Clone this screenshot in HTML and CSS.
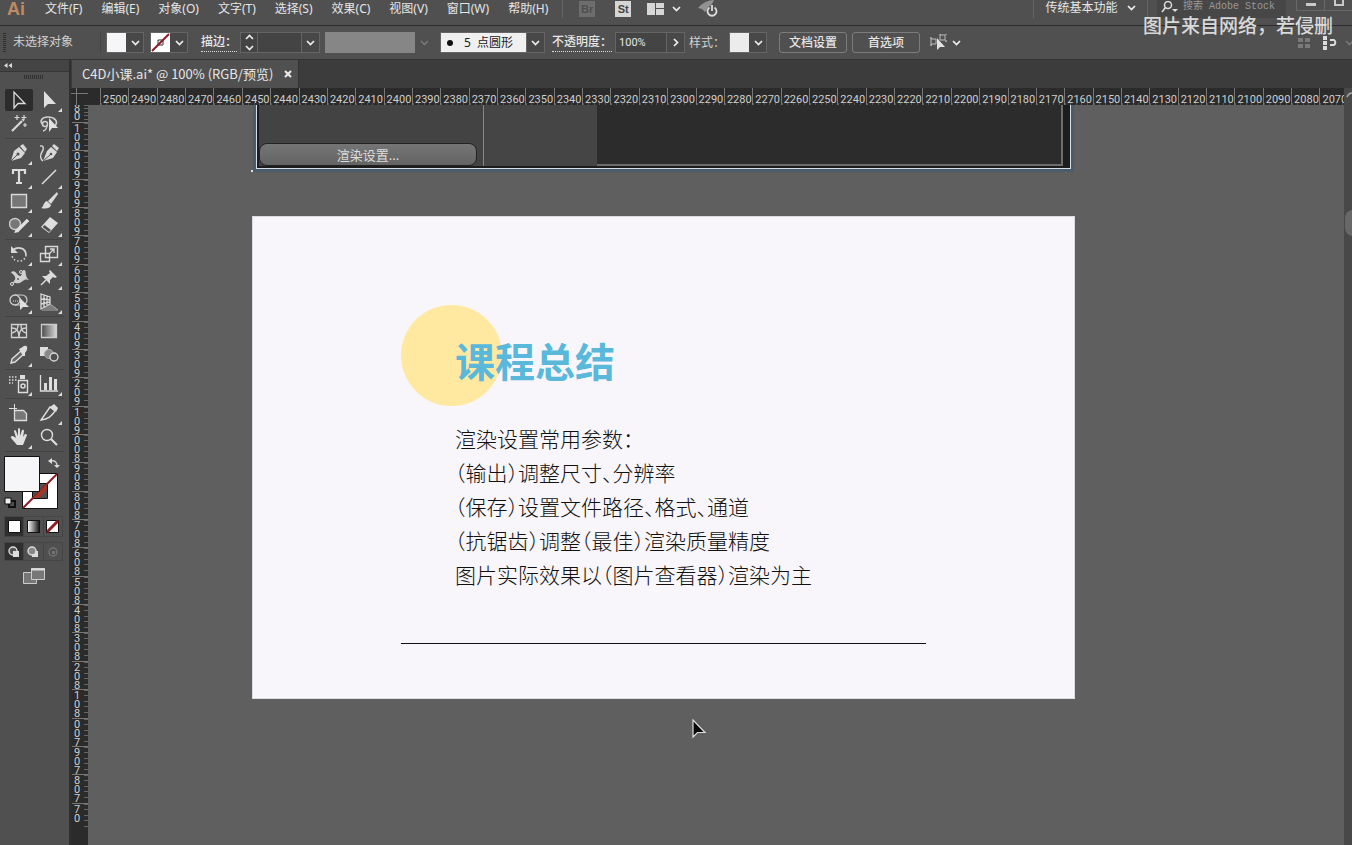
FILE: index.html
```html
<!DOCTYPE html>
<html lang="zh-CN">
<head>
<meta charset="utf-8">
<title>C4D小课.ai</title>
<link rel="stylesheet" href="styles.css">
</head>
<body>
<svg class="defs" aria-hidden="true">
  <symbol id="chev" viewBox="0 0 9 6"><path d="M1 1l3.500 3.500L8 1" fill="none" stroke="currentColor" stroke-width="1.700"/></symbol>
  <linearGradient id="fade"><stop offset="0" stop-color="#4a4a4a"/><stop offset="1" stop-color="#d8d8d8"/></linearGradient>
  <linearGradient id="fade2"><stop offset="0" stop-color="#fff"/><stop offset="1" stop-color="#111"/></linearGradient>
</svg>
<div class="app">
  <header class="menubar">
    <span class="logo">Ai</span>
    <nav class="menus">
      <button>文件(F)</button><button>编辑(E)</button><button>对象(O)</button><button>文字(T)</button><button>选择(S)</button><button>效果(C)</button><button>视图(V)</button><button>窗口(W)</button><button>帮助(H)</button>
    </nav>
    <div class="bridge">
      <button class="chip dim">Br</button>
      <button class="chip">St</button>
      <button class="arrange" aria-label="排列文档"><svg width="17" height="12" viewBox="0 0 17 12"><path d="M0 0h8v12H0zM9 0h8v5H9zM9 6h8v6H9z" fill="#d6d6d6"/></svg><svg class="chev" width="9" height="6"><use href="#chev"/></svg></button>
      <button class="gpu" aria-label="GPU 性能"><svg width="22" height="18" viewBox="0 0 22 18"><path d="M1 8Q8 0 17 0Q15 5 8 12L5 9Z" fill="#929292"/><circle cx="15" cy="11" r="5.500" fill="#505050"/><path d="M12.500 7.500a4.500 4.500 0 1 0 5 0M15 5v6" fill="none" stroke="#ddd" stroke-width="1.800"/></svg></button>
    </div>
    <div class="workspace">
      <button class="preset">传统基本功能<svg class="chev" width="9" height="6"><use href="#chev"/></svg></button>
      <label class="search"><svg width="18" height="12" viewBox="0 0 18 12"><circle cx="7" cy="4" r="3.500" fill="none" stroke="#ddd" stroke-width="1.500"/><path d="M4.500 6.500L1 11" stroke="#ddd" stroke-width="1.600"/><path d="M11 8h6l-3 3z" fill="#ddd"/></svg><input type="text" placeholder="搜索 Adobe Stock" aria-label="搜索 Adobe Stock"></label>
      <div class="window"><button aria-label="最小化"><svg width="10" height="4"><path d="M0 0h10v3H0z" fill="#c9c9c9"/></svg></button><button aria-label="最大化"><svg width="10" height="7"><path d="M1 0v5h8V0" fill="none" stroke="#c9c9c9" stroke-width="2"/></svg></button></div>
    </div>
    <p class="credit">图片来自网络，若侵删</p>
  </header>

  <section class="controls">
    <span class="grip-v"></span>
    <span class="state">未选择对象</span>
    <button class="drop fill" aria-label="填色"><span class="swatch"></span><svg class="chev" width="9" height="6"><use href="#chev"/></svg></button>
    <button class="drop stroke" aria-label="描边颜色"><svg width="19" height="19" viewBox="0 0 19 19"><path d="M0 0h19v19H0z" fill="#fff"/><path d="M7 7h5v5H7z" fill="none" stroke="#333"/><path d="M1 18L18 1" stroke="#8c1a22" stroke-width="2"/></svg><svg class="chev" width="9" height="6"><use href="#chev"/></svg></button>
    <label class="link" for="weight">描边：</label>
    <div class="combo weight">
      <button class="step" aria-label="调整描边粗细"><svg width="9" height="17" viewBox="0 0 9 17"><path d="M1 5l3.500-3.500L8 5M1 12l3.500 3.500L8 12" fill="none" stroke="#eee" stroke-width="1.600"/></svg></button>
      <input id="weight" type="text"><button class="open" aria-label="描边预设"><svg class="chev" width="9" height="6"><use href="#chev"/></svg></button>
    </div>
    <button class="profile" aria-label="变量宽度配置"><span></span><svg class="chev" width="9" height="6"><use href="#chev"/></svg></button>
    <div class="combo brush">
      <span class="dot"></span><select aria-label="画笔"><option>5&nbsp; 点圆形</option></select><span class="open"><svg class="chev" width="9" height="6"><use href="#chev"/></svg></span>
    </div>
    <label class="link opacity-label" for="opacity">不透明度：</label>
    <div class="combo opacity"><input id="opacity" type="text" value="100%"><button class="open" aria-label="不透明度滑块"><svg width="6" height="9" viewBox="0 0 6 9"><path d="M1 1l3.500 3.500L1 8" fill="none" stroke="#eee" stroke-width="1.700"/></svg></button></div>
    <span class="style-label">样式：</span>
    <button class="drop style" aria-label="图形样式"><span class="swatch"></span><svg class="chev" width="9" height="6"><use href="#chev"/></svg></button>
    <button class="push first">文档设置</button>
    <button class="push">首选项</button>
    <button class="similar" aria-label="选择类似的对象"><svg width="17" height="17" viewBox="0 0 17 17"><path d="M1 5h5v5H1zM10 1h5v5h-5z" fill="none" stroke="#bbb"/><path d="M0 4h2M0 11h2M9 0h2M15 0h2M15 7h2" stroke="#ddd"/><path d="M7 4v12l3-3h5z" fill="#e2e2e2"/></svg><svg class="chev" width="9" height="6"><use href="#chev"/></svg></button>
    <div class="dock">
      <button aria-label="对齐像素"><svg width="12" height="12" viewBox="0 0 12 12"><path d="M0 1h5v4H0zM7 1h5v4H7zM0 7h5v4H0zM7 7h5v4H7z" fill="#7a7a7a"/></svg></button>
      <button aria-label="面板选项"><svg width="15" height="14" viewBox="0 0 15 14"><path d="M0 0h4v4H0zM0 5h4v4H0zM0 10h4v4H0z" fill="#ddd"/><path d="M7 4h4a3 3 0 0 1 0 5H7" fill="none" stroke="#ddd" stroke-width="2"/></svg></button>
      <button aria-label="更多"><svg class="chev faint" width="9" height="6"><use href="#chev"/></svg></button>
    </div>
  </section>

  <main class="body">
    <aside class="toolbox">
      <button class="collapse" aria-label="折叠工具栏"><svg width="8" height="5" viewBox="0 0 8 5"><path d="M3.500 0v5L0 2.500zM8 0v5L4.500 2.500z" fill="#ddd"/></svg></button>
      <span class="grip-h"></span>
      <div class="tools">
        <button class="on" aria-label="选择"><svg viewBox="0 0 20 20"><path d="M5 2v16l4-4.500h7z" fill="none" stroke="#ddd" stroke-width="1.300"/></svg></button>
        <button class="more" aria-label="直接选择"><svg viewBox="0 0 20 20"><path d="M5 1v17l4-4h8z" fill="#e0e0e0"/></svg></button>
        <button aria-label="魔棒"><svg viewBox="0 0 20 20"><path d="M3 17L13 7" stroke="#d8d8d8" stroke-width="2.200"/><path d="M8 1v5M5.500 3.500h5M15 1v5M12.500 3.500h5M16 9v4M14 11h4M13 5l2 2" stroke="#d8d8d8" stroke-width="1.200"/></svg></button>
        <button aria-label="套索"><svg viewBox="0 0 20 20"><path d="M4 11C0 7 3 3 9 3s11 4 7 9" fill="none" stroke="#d0d0d0" stroke-width="1.600"/><circle cx="6" cy="10" r="2.500" fill="none" stroke="#d0d0d0" stroke-width="1.400"/><path d="M8 11q0 5-4 6" fill="none" stroke="#d0d0d0" stroke-width="1.300"/><path d="M10 4v14l3-4h6z" fill="#e0e0e0"/></svg></button>
      </div>
      <div class="tools">
        <button class="more" aria-label="钢笔"><svg viewBox="0 0 20 20"><path d="M2 18L5 8l5-4 6 6-4 5z" fill="#d8d8d8"/><path d="M11 3l3-2 4 5-2 3z" fill="#d8d8d8"/><path d="M2 18l6-6" stroke="#505050"/><circle cx="9" cy="11" r="1.500" fill="#505050"/></svg></button>
        <button aria-label="曲率"><svg viewBox="0 0 20 20"><path d="M4 18l4-10 4-4 6 5-4 6z" fill="#d8d8d8"/><path d="M13 3l2-2 5 4-2 3z" fill="#d8d8d8"/><path d="M4 18l7-6" stroke="#505050"/><circle cx="12" cy="11" r="1.300" fill="#505050"/><path d="M1 3c4-1 4 3 2 6s-2 7 1 9" fill="none" stroke="#d8d8d8" stroke-width="1.400"/></svg></button>
        <button class="more" aria-label="文字"><svg viewBox="0 0 20 20"><path d="M4 7V3h12v4M10 3v13M7 16h6" fill="none" stroke="#dcdcdc" stroke-width="2.200"/></svg></button>
        <button class="more" aria-label="直线段"><svg viewBox="0 0 20 20"><path d="M3 17L17 3" stroke="#d8d8d8" stroke-width="1.600"/></svg></button>
        <button class="more" aria-label="矩形"><svg viewBox="0 0 20 20"><path d="M2.500 3.500h15v13h-15z" fill="#777" stroke="#d8d8d8" stroke-width="1.400"/></svg></button>
        <button class="more" aria-label="画笔"><svg viewBox="0 0 20 20"><path d="M18 1l1 2-7 10-3-3z" fill="#dcdcdc"/><path d="M8 10l4 4c-1 4-6 4-10 3 3-1 2-6 6-7z" fill="#dcdcdc"/></svg></button>
        <button class="more" aria-label="Shaper"><svg viewBox="0 0 20 20"><circle cx="6" cy="9" r="5.500" fill="#777" stroke="#ccc" stroke-width="1.400"/><path d="M8 16L19 5" stroke="#e0e0e0" stroke-width="3.200"/><path d="M5 18l2-4 3 3z" fill="#e0e0e0"/></svg></button>
        <button class="more" aria-label="橡皮擦"><svg viewBox="0 0 20 20"><path d="M2 12L11 2l8 6-9 10z" fill="#dedede"/><path d="M5.500 10l6.500 5-2 2-6.500-5z" fill="#505050"/></svg></button>
      </div>
      <div class="tools">
        <button class="more" aria-label="旋转"><svg viewBox="0 0 20 20"><path d="M4 6c5-4 13-2 13 5" fill="none" stroke="#d8d8d8" stroke-width="1.700"/><path d="M2 2v7h7z" fill="#d8d8d8"/><path d="M17 11c-1 8-12 8-14 1" fill="none" stroke="#d8d8d8" stroke-width="1.500" stroke-dasharray="1.500 2"/></svg></button>
        <button class="more" aria-label="比例缩放"><svg viewBox="0 0 20 20"><path d="M6.500 2.500h12v11h-12zM1.500 9.500h9v8h-9z" fill="none" stroke="#d8d8d8" stroke-width="1.400"/><path d="M10 10l5-5M11 5h4v4" fill="none" stroke="#d8d8d8" stroke-width="1.300"/></svg></button>
        <button class="more" aria-label="宽度"><svg viewBox="0 0 20 20"><path d="M2 4c5-3 6 4 9 4s1-6 4-6 0 6 5 10c-5-2-6 2-10 3s-4-2-7 1c2-4 4-4 3-7s-3-3-4-5z" fill="#d0d0d0"/><circle cx="12" cy="4" r="1.500" fill="#505050" stroke="#ddd"/><circle cx="9" cy="11" r="1.500" fill="#505050" stroke="#ddd"/><circle cx="3" cy="16" r="1.500" fill="#505050" stroke="#ddd"/></svg></button>
        <button class="more" aria-label="操控变形"><svg viewBox="0 0 20 20"><path d="M11 2l7 7-2 1-2-1-3 3v4L3 8h4l4-3-1-2z" fill="#dcdcdc"/><path d="M7 12l-5 5" stroke="#dcdcdc" stroke-width="1.500"/></svg></button>
        <button class="more" aria-label="形状生成器"><svg viewBox="0 0 20 20"><circle cx="6" cy="8" r="5" fill="none" stroke="#ccc" stroke-width="1.300"/><path d="M6 3h7a5 5 0 0 1 0 10H6" fill="none" stroke="#ccc" stroke-width="1.200"/><path d="M4 9h8" stroke="#ddd" stroke-dasharray="1 1"/><path d="M11 6v12l3-3h6z" fill="#e0e0e0"/></svg></button>
        <button class="more" aria-label="透视网格"><svg viewBox="0 0 20 20"><path d="M2 2l9 3v7l-9 5zM5 3v12M8 4v10M2 7l9 1M2 12l9-2" fill="none" stroke="#d8d8d8" stroke-width="1.300"/><path d="M8 14h6M5 16h12M3 18h16M11 12l8 6" stroke="#aaa"/></svg></button>
      </div>
      <div class="tools">
        <button aria-label="网格"><svg viewBox="0 0 20 20"><path d="M2.500 3.500h15v13h-15z" fill="none" stroke="#d0d0d0" stroke-width="1.300"/><path d="M3 7c5 0 7 3 7 9M17 7c-5 0-7 3-7 9M3 12c4-1 6-4 6-8M17 12c-4-1-5-4-5-8" fill="none" stroke="#d0d0d0" stroke-width="1.400"/></svg></button>
        <button aria-label="渐变"><svg viewBox="0 0 20 20"><path d="M2.500 3.500h15v13h-15z" fill="url(#fade)" stroke="#ccc" stroke-width="1.300"/></svg></button>
        <button class="more" aria-label="吸管"><svg viewBox="0 0 20 20"><path d="M12 6l3 3-9 8-4 1 1-4z" fill="#666" stroke="#ddd" stroke-width="1.400"/><path d="M10 4l2-1 3-2q4-1 3 4l-2 3v3l-2 0z" fill="#ddd"/></svg></button>
        <button aria-label="混合"><svg viewBox="0 0 20 20"><path d="M1 2h8v9H1z" fill="#ddd"/><circle cx="10" cy="9" r="4.500" fill="#888" stroke="#aaa"/><circle cx="15" cy="12" r="4" fill="#505050" stroke="#ddd" stroke-width="1.300"/></svg></button>
      </div>
      <div class="tools">
        <button class="more" aria-label="符号喷枪"><svg viewBox="0 0 20 20"><path d="M9.500 6.500h9v12h-9z" fill="none" stroke="#ddd" stroke-width="1.400"/><path d="M11 1h5v4h-5z" fill="#ddd"/><circle cx="14" cy="12" r="2" fill="none" stroke="#ddd" stroke-width="1.500"/><path d="M0 3h9M0 6h8M0 9h4" stroke="#ddd" stroke-width="1.500" stroke-dasharray="1.500 1.500"/></svg></button>
        <button class="more" aria-label="柱形图"><svg viewBox="0 0 20 20"><path d="M1.500 1v16H19" fill="none" stroke="#ddd" stroke-width="1.300"/><path d="M5 9h3v7H5zM10 3h3v13h-3zM15 5h3v11h-3z" fill="#ddd"/></svg></button>
      </div>
      <div class="tools">
        <button aria-label="画板"><svg viewBox="0 0 20 20"><path d="M0 5.500h8M5.500 1v7" stroke="#ddd"/><path d="M5.500 7.500h9l3 3v7h-12z" fill="#777" stroke="#ddd" stroke-width="1.300"/></svg></button>
        <button class="more" aria-label="切片"><svg viewBox="0 0 20 20"><path d="M11 4l4-3 4 4-2 4z" fill="#ddd"/><path d="M11 4L2 17c7-1 10-3 14-9z" fill="none" stroke="#ddd" stroke-width="1.400"/></svg></button>
        <button class="more" aria-label="抓手"><svg viewBox="0 0 20 20"><path d="M8 18L2 11q-1-2 2-2l3 2L5 4q1-2 2 0l2 5V2q1-2 2 0v7l2-6q2-1 2 1l-1 6 2-3q2 0 2 1l-4 10z" fill="#e0e0e0"/></svg></button>
        <button aria-label="缩放"><svg viewBox="0 0 20 20"><circle cx="8" cy="8" r="5.500" fill="none" stroke="#ddd" stroke-width="1.400"/><path d="M12 12l6 6" stroke="#ddd" stroke-width="2.200"/></svg></button>
      </div>
      <button class="paint" aria-label="填色和描边"><svg width="58" height="54" viewBox="0 0 58 54"><path d="M18.500 17.500h35v35h-35z" fill="#fff" stroke="#111"/><path d="M28.500 27.500h15v15h-15z" fill="#505050" stroke="#111"/><path d="M19 52L53 18" stroke="#8c1c22" stroke-width="2"/><path d="M29 42L43 28V34L35 42Z" fill="#a33529"/><path d="M.5.500h35v35h-35z" fill="#f6f5f8" stroke="#111"/><path d="M47 5q6-1 6 5" fill="none" stroke="#ccc" stroke-width="1.500"/><path d="M44 5l4-3v6zM50 9h6l-3 3z" fill="#ddd"/><path d="M5 45h6v6H5z" fill="none" stroke="#111" stroke-width="2"/><path d="M1 42h6v6H1z" fill="#eee" stroke="#111"/></svg></button>
      <div class="modes fills">
        <button class="on" aria-label="颜色"><svg width="13" height="13"><path d="M.5.500h12v12H.5z" fill="#fff" stroke="#111"/></svg></button>
        <button aria-label="渐变填充"><svg width="13" height="13"><path d="M.5.500h12v12H.5z" fill="url(#fade2)" stroke="#111"/></svg></button>
        <button aria-label="无"><svg width="13" height="13"><path d="M.5.500h12v12H.5z" fill="#fff" stroke="#111"/><path d="M1 12L12 1" stroke="#8c1c22" stroke-width="3"/></svg></button>
      </div>
      <div class="modes">
        <button class="on" aria-label="正常绘图"><svg width="12" height="12"><circle cx="5" cy="5" r="4" fill="#555" stroke="#ddd" stroke-width="1.400"/><path d="M5 5h6v6H5z" fill="#ddd"/></svg></button>
        <button aria-label="背面绘图"><svg width="12" height="12"><path d="M5 5h6v6H5z" fill="#ddd"/><circle cx="5" cy="5" r="4" fill="#888" stroke="#ddd" stroke-width="1.400"/></svg></button>
        <button aria-label="内部绘图"><svg width="12" height="12"><circle cx="6" cy="6" r="4" fill="none" stroke="#727272" stroke-width="1.400"/><path d="M5 5h3v3H5z" fill="#727272"/></svg></button>
      </div>
      <button class="screen" aria-label="更改屏幕模式"><svg width="22" height="16"><path d="M.5 4.500h13v11H.5z" fill="#777" stroke="#ccc"/><path d="M8.500.500h13v11h-13z" fill="#777" stroke="#ccc"/><path d="M8 1.500h14" stroke="#ddd" stroke-width="2"/></svg></button>
    </aside>

    <section class="document">
      <div class="tabs"><div class="tab"><span>C4D小课.ai* @ 100% (RGB/预览)</span><button aria-label="关闭"><svg width="8" height="8" viewBox="0 0 8 8"><path d="M1 1l6 6M7 1L1 7" stroke="#eee" stroke-width="2"/></svg></button></div></div>
      <div class="view">
        <div class="corner"></div>
        <div class="ruler-x" id="rulerX"></div>
        <div class="ruler-y" id="rulerY"></div>
        <div class="canvas">
          <div class="shot">
            <div class="shot-side"><button>渲染设置...</button></div>
            <div class="shot-mid"></div>
            <div class="shot-main"></div>
          </div>
          <span class="anchor"></span>
          <article class="artboard">
            <div class="sun"></div>
            <h1>课程总结</h1>
            <div class="notes">
              <p>渲染设置常用参数：</p>
              <p>（输出）调整尺寸、分辨率</p>
              <p>（保存）设置文件路径、格式、通道</p>
              <p>（抗锯齿）调整（最佳）渲染质量精度</p>
              <p>图片实际效果以（图片查看器）渲染为主</p>
            </div>
            <hr>
          </article>
          <svg class="pointer" width="15" height="20" viewBox="0 0 15 20"><path d="M1 1v17l4.500-4.500H13z" fill="#0a0a0a" stroke="#ddd" stroke-width="1.200"/></svg>
        </div>
        <div class="scroll"><svg width="8" height="6" viewBox="0 0 8 6"><path d="M3 5q2-4 5-4" fill="none" stroke="#aaa" stroke-width="1.500"/></svg><span></span></div>
      </div>
    </section>
  </main>
</div>
<script src="app.js"></script>
</body>
</html>
```
FILE: styles.css
```css
* { box-sizing: border-box; }
body {
  margin: 0;
  background: #505050;
  color: #e6e6e6;
  font: 12px/16px "Noto Sans", "Noto Sans CJK SC", sans-serif;
}
button, input, select { font: inherit; color: inherit; margin: 0; padding: 0; border: 0; background: none; border-radius: 0; }
button { display: flex; align-items: center; justify-content: center; flex: none; white-space: nowrap; }
svg { display: block; flex: none; }
p, h1 { margin: 0; }
.defs { position: absolute; width: 0; height: 0; }
.chev { color: #eee; }
.faint { color: #777; }
.app { display: flex; flex-direction: column; height: 100vh; overflow: hidden; }

.menubar { position: relative; display: flex; height: 26px; flex: none; padding-bottom: 8px; align-items: center; border-bottom: 1px solid #2b2b2b; }
.logo { width: 45px; padding-left: 7px; color: #c08a63; font: bold 18px/16px "Liberation Sans", sans-serif; }
.menus { display: flex; gap: 19px; }
.bridge { display: flex; align-items: center; margin-left: 14px; padding-left: 16px; border-left: 1px solid #656565; height: 18px; }
.chip { width: 16px; height: 16px; background: #d6d6d6; color: #444; font: bold 11px/16px "Liberation Sans", sans-serif; margin-right: 20px; }
.chip.dim { background: #6d6d6d; color: #4f4f4f; }
.arrange { gap: 8px; margin-left: -4px; }
.gpu { margin-left: 16px; }
.workspace { display: flex; align-items: center; margin-left: auto; height: 18px; }
.preset { gap: 9px; width: 115px; height: 18px; padding-bottom: 2px; border: solid #656565; border-width: 0 1px; margin-right: 9px; }
.search { display: flex; align-items: center; width: 129px; height: 18px; background: #474747; padding: 0 0 4px 4px; }
.search input { min-width: 0; flex: 1; height: 14px; padding-left: 4px; font: 10px/14px "Liberation Mono", "Noto Sans CJK SC", monospace; color: #999; }
.search input::placeholder { color: #999; opacity: 1; }
.window { display: flex; margin: 0 0 7px 10px; border: 1px solid #686868; border-width: 0 0 1px 1px; height: 11px; }
.window button { width: 28px; height: 10px; border-right: 1px solid #686868; }
.window button:last-child { width: 27px; border: 0; align-items: flex-start; }
.credit { position: absolute; z-index: 2; right: 19px; top: 12px; font-size: 19px; line-height: 28px; font-weight: 500; color: #d9d9d9; }

.controls { display: flex; align-items: center; height: 34px; flex: none; border-bottom: 1px solid #333; padding-left: 3px; }
.grip-v { width: 3px; height: 20px; background: repeating-linear-gradient(#303030 0 1px, transparent 1px 2px); }
.state { width: 95px; height: 20px; padding-left: 7px; border-right: 1px solid #454545; color: #d0d0d0; line-height: 18px; }
.drop { width: 38px; height: 21px; border: 1px solid #656565; background: #484848; gap: 5px; justify-content: flex-start; }
.drop .swatch { width: 19px; height: 19px; background: #f6f5f8; }
.fill { margin-left: 5px; }
.stroke { margin-left: 6px; }
.link { border-bottom: 1px dotted #ddd; line-height: 18px; white-space: nowrap; margin-left: 13px; font-weight: 500; }
.opacity-label { margin-left: 7px; }
.combo { display: flex; height: 21px; border: 1px solid #656565; background: #444; }
.combo input, .combo select { min-width: 0; flex: 1; }
.combo .open { display: flex; align-items: center; justify-content: center; width: 18px; background: #484848; border-left: 1px solid #656565; }
.weight { width: 80px; margin-left: 3px; }
.step { width: 17px; border-right: 1px solid #656565; }
.profile { width: 104px; height: 21px; margin-left: 5px; gap: 5px; }
.profile span { flex: 1; height: 21px; background: #868686; }
.profile .chev { color: #777; }
.brush { width: 105px; margin-left: 11px; background: #f0f0f0; align-items: stretch; }
.brush .dot { width: 6px; height: 6px; margin: 7px 11px 0 6px; border-radius: 50%; background: #111; }
.brush select { appearance: none; color: #222; }
.opacity { width: 70px; margin-left: 3px; }
.opacity input { padding-left: 3px; font: 11px/18px Roboto, sans-serif; }
.style-label { margin-left: 4px; white-space: nowrap; color: #d0d0d0; }
.style { margin-left: 4px; }
.style .swatch { background: #ececec; }
.push { width: 68px; height: 21px; border: 1px solid #7c7c7c; border-radius: 3px; margin-right: 5px; font-weight: 500; }
.push.first { margin-left: 12px; }
.similar { gap: 5px; margin-left: 5px; }
.dock { display: flex; align-items: center; gap: 13px; margin-left: auto; margin-right: -2px; }
.dock button:last-child { margin-left: -6px; }

.body { display: flex; flex: 1; min-height: 0; }
.toolbox { display: flex; flex-direction: column; width: 71px; flex: none; border-right: 2px solid #303030; background: #505050; }
.collapse { width: 100%; height: 12px; justify-content: flex-start; padding-left: 4px; background: #444; border-bottom: 1px solid #363636; }
.grip-h { width: 19px; height: 4px; margin: 3px 0 9px 24px; background: repeating-linear-gradient(90deg, #303030 0 1px, transparent 1px 2px); }
.tools { display: grid; grid-template-columns: 28px 28px; grid-auto-rows: 24px; gap: 0 2px; margin: 0 5px 2px; padding-bottom: 2px; border-bottom: 1px solid #434343; align-items: center; }
.tools button { position: relative; height: 22px; border-radius: 2px; }
.tools svg { width: 20px; height: 20px; }
.tools .on { background: #2c2c2c; }
.tools .more::after { content: ""; position: absolute; right: 1px; bottom: -1px; border: solid transparent; border-width: 2px; border-right-color: #ddd; border-bottom-color: #ddd; }
.paint { margin: 2px 0 6px 4px; align-self: flex-start; }
.modes { display: flex; width: 59px; margin: 0 0 5px 4px; border: 1px solid #454545; }
.modes button { flex: 1; height: 17px; border-right: 1px solid #454545; }
.fills button { height: 19px; }
.modes button:last-child { border: 0; }
.modes .on { background: #2f2f2f; }
.screen { margin: 2px 0 0 23px; align-self: flex-start; }

.document { display: flex; flex-direction: column; flex: 1; min-width: 0; background: #3c3c3c; }
.tabs { height: 28px; flex: none; padding-left: 1px; }
.tab { display: flex; align-items: center; justify-content: space-between; width: 227px; height: 28px; padding: 0 6px 0 10px; background: #505050; border-right: 1px solid #333; white-space: nowrap; font-family: "Noto Sans CJK SC", sans-serif; font-size: 13px; }
.view { display: grid; grid-template: 17px 1fr / 17px 1fr 8px; flex: 1; min-height: 0; }
.corner { background: linear-gradient(#777, #777) 5px 0 / 1px 100% no-repeat, linear-gradient(#777, #777) 0 5px / 100% 1px no-repeat, #2b2b2b; }
.ruler-x, .ruler-y { overflow: hidden; background: #2b2b2b; color: #cfcfcf; font: 11px/11px Roboto, sans-serif; }
.ruler-x { display: flex; padding-left: 12px; margin-right: -4px; clip-path: inset(0 4px 0 0); }
.ruler-x span { flex: 1 1 0; min-width: 0; padding: 6px 0 0 2px; border-left: 1px solid #777; background: repeating-linear-gradient(90deg, #555 0 1px, transparent 1px 20%) bottom / 100% 2px no-repeat; }
.ruler-y { display: flex; flex-direction: column; padding: 17px 0 14px 1px; position: relative; }
.ruler-y span { flex: 1 1 0; min-height: 0; padding: 1px 0 0 2px; border-top: 1px solid #777; line-height: 9px; white-space: pre; background: repeating-linear-gradient(#666 0 1px, transparent 1px 20%) right / 4px 100% no-repeat; }
.ruler-y .lead { position: absolute; left: 1px; right: 0; top: 0; height: 17px; padding-top: 0; border: 0; line-height: 8px; }

.canvas { position: relative; overflow: hidden; background: #5f5f5f; }
.shot { position: absolute; left: 168px; top: -40px; width: 815px; height: 104px; display: flex; padding: 0 7px 2px 2px; background: #1d1d1d; border: solid #d5dde5; border-width: 0 1px 1px; box-shadow: 0 0 0 3px #4c5b6b; }
.shot-side { display: flex; flex: 0 0 225px; align-items: flex-end; background: #434343; border-right: 1px solid #858585; }
.shot-side button { width: 218px; height: 23px; border: 1px solid #222; border-radius: 8px; background: linear-gradient(#757575, #646464); color: #ddd; font-size: 13px; }
.shot-mid { flex: 0 0 113px; background: #454545; }
.shot-main { flex: 1; background: #2c2c2c; border: solid #6d6d6d; border-width: 0 2px 2px 0; }
.anchor { position: absolute; left: 163px; top: 65px; width: 2px; height: 2px; background: #ddd; }
.artboard { position: absolute; left: 164px; top: 111px; width: 823px; height: 483px; padding: 113px 149px 0 202px; background: #f8f6fa; border: 1px solid #dcdbe0; color: #111; font-family: "Noto Sans CJK SC", sans-serif; }
.sun { position: absolute; left: 148px; top: 88px; width: 101px; height: 101px; border-radius: 50%; background: #ffe89f; }
.artboard h1 { position: relative; font-size: 40px; line-height: 60px; font-weight: 700; color: #5ab8db; }
.notes { margin-top: 31px; font-size: 21px; line-height: 34px; font-weight: 300; font-feature-settings: "halt"; white-space: nowrap; }
.artboard hr { margin: 52px -1px 0 -54px; border: 0; border-top: 1px solid #111; }
.pointer { position: absolute; left: 604px; top: 614px; }
.scroll { grid-column: 3; grid-row: 1 / 3; background: #484848; overflow: hidden; padding-top: 4px; }
.scroll span { display: block; width: 16px; height: 26px; margin: 112px 0 0 1px; border-radius: 8px; background: #686868; }
.corner, .ruler-x { grid-row: 1; }
.ruler-y { grid-column: 1; grid-row: 2; }
.canvas { grid-column: 2; grid-row: 2; }
```
FILE: app.js
```javascript
const rulerX = document.getElementById("rulerX");
for (let v = 2500; v >= 2070; v -= 10) {
  const mark = document.createElement("span");
  mark.textContent = v;
  rulerX.append(mark);
}

const rulerY = document.getElementById("rulerY");
const lead = document.createElement("span");
lead.className = "lead";
lead.textContent = "8\n0";
rulerY.append(lead);
const stacks = ["100", "009"];
for (let d = 9; d >= 1; d--) stacks.push(d + "09");
stacks.push("008");
for (let d = 9; d >= 1; d--) stacks.push(d + "08");
stacks.push("007", "907", "807", "70");
for (const digits of stacks) {
  const mark = document.createElement("span");
  mark.textContent = digits.split("").join("\n");
  rulerY.append(mark);
}
```
